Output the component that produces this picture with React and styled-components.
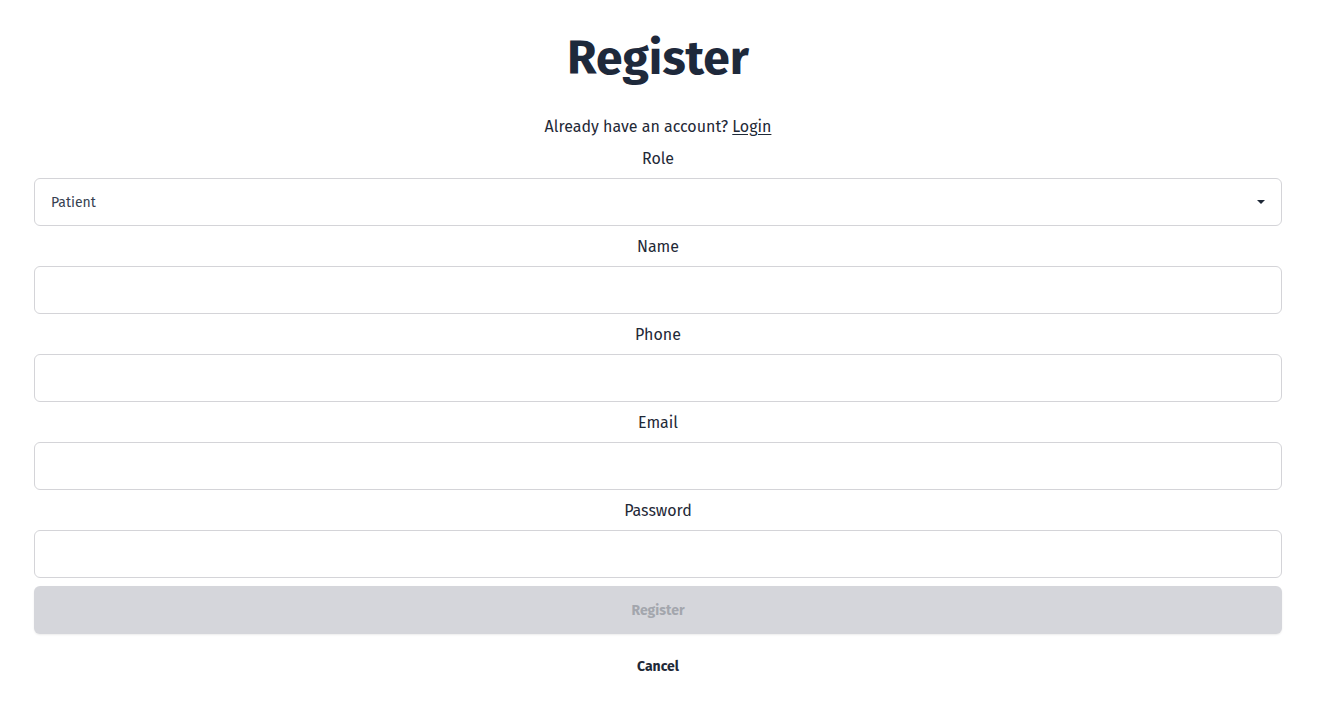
import React from "react";
import styled, { createGlobalStyle } from "styled-components";

const Global = createGlobalStyle`
  html, body { margin: 0; padding: 0; background: #fff; }
  body { font-family: "Fira Sans", "Open Sans", "Noto Sans", sans-serif; color: #1f2937; }
  * { box-sizing: border-box; }
`;

const Page = styled.div`
  padding: 0 59px 0 34px;
`;

const Form = styled.form`
  display: flex;
  flex-direction: column;
  gap: 8px;
  text-align: center;
`;

const Title = styled.h1`
  margin: 30px 0 20px;
  font-size: 48px;
  line-height: 56px;
  font-weight: 700;
  color: #1e293b;
`;

const Hint = styled.p`
  margin: 0;
  padding-top: 1px;
  font-size: 16px;
  line-height: 23px;
  color: #1f2937;
`;

const LinkA = styled.a`
  color: #1f2937;
  text-decoration: underline;
  text-underline-offset: 2px;
`;

const Label = styled.label`
  display: block;
  padding-top: 1px;
  font-size: 16px;
  line-height: 23px;
  color: #1f2937;
`;

const Field = styled.input`
  width: 100%;
  height: 48px;
  border: 1px solid #d4d4d8;
  border-radius: 6px;
  padding: 0 16px;
  font: inherit;
  font-size: 14px;
  outline: none;
  background: #fff;
`;

const SelectWrap = styled.div`
  position: relative;
`;

const Select = styled.select`
  width: 100%;
  height: 48px;
  border: 1px solid #d4d4d8;
  border-radius: 6px;
  padding: 0 16px;
  font-family: inherit;
  font-size: 14px;
  color: #374151;
  background: #fff;
  appearance: none;
  outline: none;
`;

const Caret = styled.span`
  position: absolute;
  right: 17px;
  top: 22px;
  width: 0;
  height: 0;
  border-left: 4px solid transparent;
  border-right: 4px solid transparent;
  border-top: 4px solid #1f2937;
  pointer-events: none;
`;

const Button = styled.button`
  height: 48px;
  width: 100%;
  border: none;
  border-radius: 6px;
  font-family: inherit;
  font-size: 14px;
  font-weight: 700;
  cursor: pointer;
  background: ${(p) => (p.$ghost ? "transparent" : "#d5d6db")};
  color: ${(p) => (p.$ghost ? "#1f2937" : "#a3a6ad")};
  box-shadow: ${(p) => (p.$ghost ? "none" : "0 1px 2px rgba(0,0,0,0.08)")};
`;

export default function App() {
  return (
    <Page>
      <Global />
      <Form onSubmit={(e) => e.preventDefault()}>
        <Title>Register</Title>
        <Hint>
          Already have an account? <LinkA href="#">Login</LinkA>
        </Hint>
        <Label>Role</Label>
        <SelectWrap>
          <Select defaultValue="patient">
            <option value="patient">Patient</option>
            <option value="doctor">Doctor</option>
          </Select>
          <Caret />
        </SelectWrap>
        <Label>Name</Label>
        <Field type="text" />
        <Label>Phone</Label>
        <Field type="tel" />
        <Label>Email</Label>
        <Field type="email" />
        <Label>Password</Label>
        <Field type="password" />
        <Button type="submit" disabled>Register</Button>
        <Button type="button" $ghost>Cancel</Button>
      </Form>
    </Page>
  );
}
